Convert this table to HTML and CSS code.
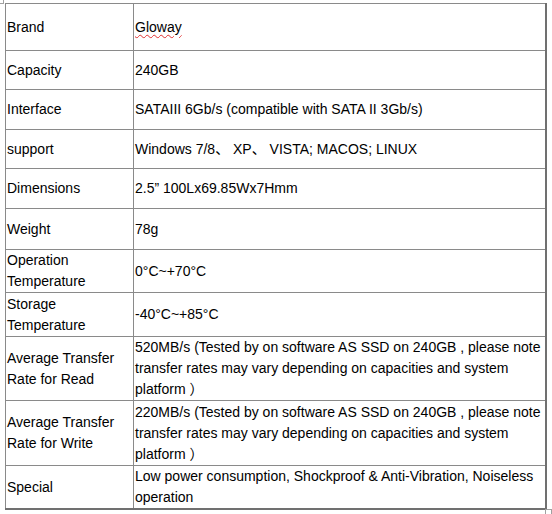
FILE: index.html
```html
<!DOCTYPE html>
<html>
<head>
<meta charset="utf-8">
<link rel="stylesheet" href="styles.css">
</head>
<body>
<div class="page">
  <span class="corner corner-tl"></span>
  <table class="specs">
    <colgroup><col class="c1"><col class="c2"></colgroup>
    <tr class="r47"><td>Brand</td><td><span class="spell">Gloway</span></td></tr>
    <tr class="r39"><td>Capacity</td><td>240GB</td></tr>
    <tr class="r40"><td>Interface</td><td>SATAIII 6Gb/s (compatible with SATA II 3Gb/s)</td></tr>
    <tr class="r39"><td>support</td><td>Windows 7/8、 XP、 VISTA; MACOS; LINUX</td></tr>
    <tr class="r40"><td>Dimensions</td><td>2.5” 100Lx69.85Wx7Hmm</td></tr>
    <tr class="r41"><td>Weight</td><td>78g</td></tr>
    <tr class="r43"><td>Operation Temperature</td><td>0°C~+70°C</td></tr>
    <tr class="r44"><td>Storage Temperature</td><td>-40°C~+85°C</td></tr>
    <tr class="r64"><td>Average Transfer Rate for Read</td><td>520MB/s (Tested by on software AS SSD on 240GB , please note transfer rates may vary depending on capacities and system platform ）</td></tr>
    <tr class="r65"><td>Average Transfer Rate for Write</td><td>220MB/s (Tested by on software AS SSD on 240GB , please note transfer rates may vary depending on capacities and system platform ）</td></tr>
    <tr class="r43"><td>Special</td><td>Low power consumption, Shockproof &amp; Anti-Vibration, Noiseless operation</td></tr>
  </table>
  <span class="corner corner-br"></span>
</div>
</body>
</html>
```

FILE: styles.css
```css
html, body {
  margin: 0;
  padding: 0;
  background: #ffffff;
}
.page {
  position: relative;
  width: 552px;
  height: 514px;
  padding: 3px 0 0 5px;
  box-sizing: border-box;
}
.specs {
  border-collapse: collapse;
  width: 542px;
  table-layout: fixed;
  font-family: "Liberation Sans", Arial, "Noto Sans CJK SC", sans-serif;
  font-size: 14px;
  line-height: 21px;
  color: #000;
  border-left: 1px solid #a0a0a0;
  border-top: 1px solid #a0a0a0;
  border-right: 2px solid #707070;
  border-bottom: 2px solid #707070;
}
.c1 { width: 128px; }
.specs td {
  border: 1px solid #8a8a8a;
  padding: 0 2px 0 1px;
  vertical-align: middle;
  text-align: left;
}
.r39 { height: 39px; }
.r40 { height: 40px; }
.r41 { height: 41px; }
.r43 { height: 43px; }
.r44 { height: 44px; }
.r47 { height: 47px; }
.r64 { height: 64px; }
.r65 { height: 65px; }
.spell {
  text-decoration-line: underline;
  text-decoration-style: wavy;
  text-decoration-color: #e03030;
  text-decoration-thickness: 1px;
  text-underline-offset: 2px;
}
.corner {
  position: absolute;
  width: 5px;
  height: 5px;
  border: 1px solid #a0a0a0;
  background: #fff;
}
.corner-tl { left: -3px; top: -3px; }
.corner-br { left: 545px; top: 509px; }
```
